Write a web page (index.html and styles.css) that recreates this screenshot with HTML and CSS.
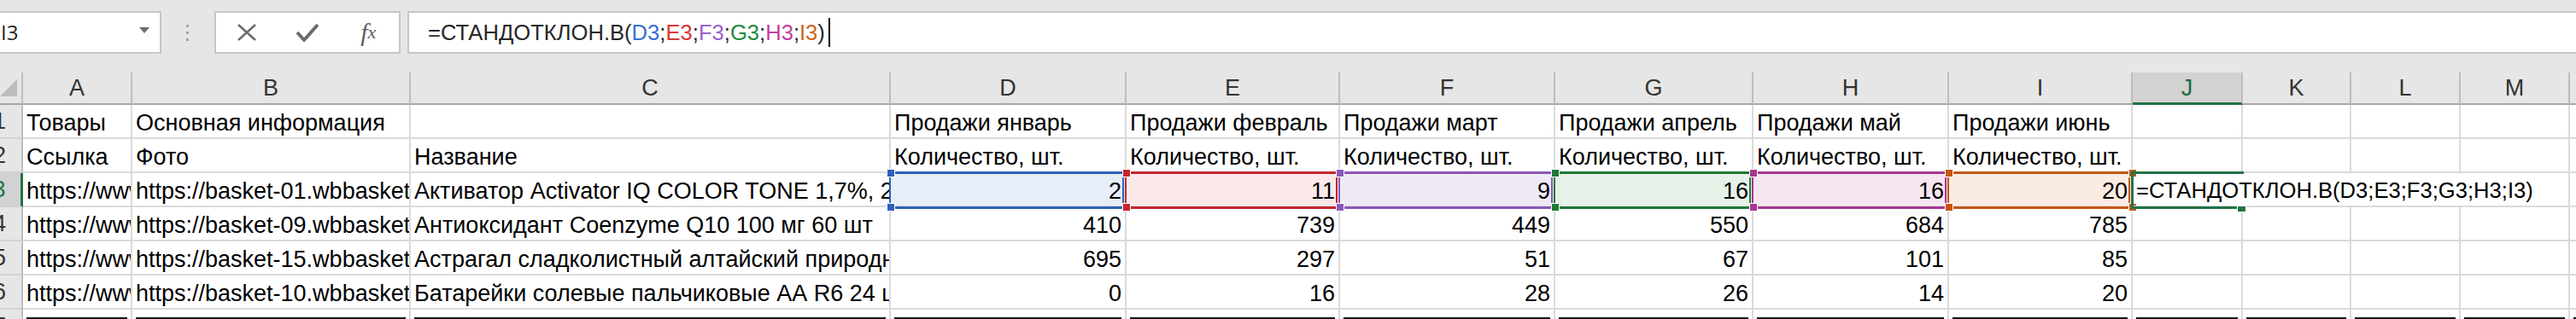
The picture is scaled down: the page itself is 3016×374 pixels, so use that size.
FILE: index.html
```html
<!DOCTYPE html>
<html lang="ru">
<head>
    <meta charset="UTF-8">
    <title>СТАНДОТКЛОН.В</title>
    <link rel="stylesheet" href="styles.css">
</head>
<body>
    <div class="toolbar">
        <div class="namebox"><span>I3</span><span class="caret"></span></div>
        <div class="grip"><i></i><i></i><i></i></div>
        <div class="fbuttons">
            <span class="fbtn">
                <svg width="24" height="20" viewBox="0 0 24 20"><path d="M2 1 L22 19 M22 1 L2 19" stroke="#6b6b6b" stroke-width="2.4" fill="none"/></svg>
            </span>
            <span class="fbtn">
                <svg width="28" height="24" viewBox="0 0 28 24"><path d="M2 12 L10 21 L26 3" stroke="#6b6b6b" stroke-width="4" fill="none" stroke-linejoin="round"/></svg>
            </span>
            <span class="fbtn fx">f<span>x</span></span>
        </div>
        <div class="formula">
            <span class="expr">=СТАНДОТКЛОН.В(<span class="c1">D3</span>;<span class="c2">E3</span>;<span class="c3">F3</span>;<span class="c4">G3</span>;<span class="c5">H3</span>;<span class="c6">I3</span>)</span><span class="cursor"></span>
        </div>
    </div>

    <div class="sheet">
        <!-- column headers -->
        <div class="hd corner"><i class="tri"></i></div>
        <div class="hd">A</div>
        <div class="hd">B</div>
        <div class="hd">C</div>
        <div class="hd">D</div>
        <div class="hd">E</div>
        <div class="hd">F</div>
        <div class="hd">G</div>
        <div class="hd">H</div>
        <div class="hd">I</div>
        <div class="hd sel">J</div>
        <div class="hd">K</div>
        <div class="hd">L</div>
        <div class="hd">M</div>
        <div class="hd">N</div>

        <!-- row 1 -->
        <div class="rn">1</div>
        <div>Товары</div>
        <div>Основная информация</div>
        <div></div>
        <div>Продажи январь</div>
        <div>Продажи февраль</div>
        <div>Продажи март</div>
        <div>Продажи апрель</div>
        <div>Продажи май</div>
        <div>Продажи июнь</div>
        <div></div><div></div><div></div><div></div><div></div>

        <!-- row 2 -->
        <div class="rn">2</div>
        <div>Ссылка</div>
        <div>Фото</div>
        <div>Название</div>
        <div>Количество, шт.</div>
        <div>Количество, шт.</div>
        <div>Количество, шт.</div>
        <div>Количество, шт.</div>
        <div>Количество, шт.</div>
        <div>Количество, шт.</div>
        <div></div><div></div><div></div><div></div><div></div>

        <!-- row 3 -->
        <div class="rn sel">3</div>
        <div>https://www.wildberries.ru/catalog/10236452/detail.aspx</div>
        <div>https://basket-01.wbbasket.ru/vol102/part10236/10236452/images/big/1.jpg</div>
        <div>Активатор Activator IQ COLOR TONE 1,7%, 250 мл</div>
        <div class="num ref r1">2<i class="frame"></i><i class="h tl"></i><i class="h tr"></i><i class="h bl"></i><i class="h br"></i></div>
        <div class="num ref r2">11<i class="frame"></i><i class="h tl"></i><i class="h tr"></i><i class="h bl"></i><i class="h br"></i></div>
        <div class="num ref r3">9<i class="frame"></i><i class="h tl"></i><i class="h tr"></i><i class="h bl"></i><i class="h br"></i></div>
        <div class="num ref r4">16<i class="frame"></i><i class="h tl"></i><i class="h tr"></i><i class="h bl"></i><i class="h br"></i></div>
        <div class="num ref r5">16<i class="frame"></i><i class="h tl"></i><i class="h tr"></i><i class="h bl"></i><i class="h br"></i></div>
        <div class="num ref r6">20<i class="frame"></i><i class="h tl"></i><i class="h tr"></i><i class="h bl"></i><i class="h br"></i></div>
        <div class="active"><span class="expr">=СТАНДОТКЛОН.В(D3;E3;F3;G3;H3;I3)</span><i class="frame"></i><i class="fill"></i></div>
        <div></div>

        <!-- row 4 -->
        <div class="rn">4</div>
        <div>https://www.wildberries.ru/catalog/15486921/detail.aspx</div>
        <div>https://basket-09.wbbasket.ru/vol1548/part154869/15486921/images/big/1.jpg</div>
        <div>Антиоксидант Coenzyme Q10 100 мг 60 шт</div>
        <div class="num">410</div>
        <div class="num">739</div>
        <div class="num">449</div>
        <div class="num">550</div>
        <div class="num">684</div>
        <div class="num">785</div>
        <div></div><div></div><div></div><div></div><div></div>

        <!-- row 5 -->
        <div class="rn">5</div>
        <div>https://www.wildberries.ru/catalog/24115823/detail.aspx</div>
        <div>https://basket-15.wbbasket.ru/vol2411/part241158/24115823/images/big/1.jpg</div>
        <div>Астрагал сладколистный алтайский природный сбор 50 г</div>
        <div class="num">695</div>
        <div class="num">297</div>
        <div class="num">51</div>
        <div class="num">67</div>
        <div class="num">101</div>
        <div class="num">85</div>
        <div></div><div></div><div></div><div></div><div></div>

        <!-- row 6 -->
        <div class="rn">6</div>
        <div>https://www.wildberries.ru/catalog/17354610/detail.aspx</div>
        <div>https://basket-10.wbbasket.ru/vol1735/part173546/17354610/images/big/1.jpg</div>
        <div>Батарейки солевые пальчиковые АА R6 24 шт</div>
        <div class="num">0</div>
        <div class="num">16</div>
        <div class="num">28</div>
        <div class="num">26</div>
        <div class="num">14</div>
        <div class="num">20</div>
        <div></div><div></div><div></div><div></div><div></div>

        <!-- row 7, only its top shows -->
        <div class="rn">7</div>
        <div class="cut"></div><div class="cut"></div><div class="cut"></div><div class="cut"></div>
        <div class="cut"></div><div class="cut"></div><div class="cut"></div><div class="cut"></div>
        <div class="cut"></div><div class="cut"></div><div class="cut"></div><div class="cut"></div>
        <div class="cut"></div><div class="cut"></div>
    </div>
</body>
</html>
```

FILE: styles.css
```css
html, body {
    margin: 0;
}

body {
    width: 3016px;
    height: 374px;
    overflow: hidden;
    background-color: #e6e6e6;
    font-family: "Liberation Sans", Arial, sans-serif;
}

/* formula bar */
.toolbar {
    display: flex;
    align-items: flex-start;
    height: 85px;
    padding-top: 13px;
    box-sizing: border-box;
}

.namebox {
    margin-left: -10px;
    width: 199px;
    height: 50px;
    box-sizing: border-box;
    border: 2px solid #c6c6c6;
    background-color: #fff;
    display: flex;
    align-items: center;
    justify-content: space-between;
    padding: 0 12px 0 9px;
    font-family: "Open Sans", sans-serif;
    font-size: 24px;
    line-height: 24px;
    color: #262626;
}

.caret {
    width: 0;
    height: 0;
    border-left: 6px solid transparent;
    border-right: 6px solid transparent;
    border-top: 7px solid #6b6b6b;
    margin-bottom: 6px;
}

.grip {
    margin-left: 29px;
    height: 50px;
    display: flex;
    flex-direction: column;
    justify-content: center;
    gap: 5px;
}

.grip i {
    width: 3px;
    height: 3px;
    background-color: #a6a6a6;
}

.fbuttons {
    margin-left: 30px;
    width: 218px;
    height: 50px;
    box-sizing: border-box;
    border: 2px solid #c6c6c6;
    background-color: #fff;
    display: flex;
}

.fbtn {
    width: 72px;
    display: flex;
    align-items: center;
    justify-content: center;
}

.fx {
    font-family: "Liberation Serif", serif;
    font-style: italic;
    font-size: 30px;
    color: #5e5e5e;
}

.fx span {
    font-size: 22px;
}

.formula {
    margin-left: 8px;
    margin-right: -10px;
    flex: 1;
    height: 50px;
    box-sizing: border-box;
    border: 2px solid #c6c6c6;
    background-color: #fff;
    display: flex;
    align-items: center;
    padding-left: 22px;
    color: #262626;
    white-space: nowrap;
}

.expr {
    font-size: 25.6px;
    line-height: 26px;
}

.cursor {
    width: 2px;
    height: 34px;
    background-color: #000;
    margin-left: 4px;
}

.c1 { color: #3a6fd1; }
.c2 { color: #d8383a; }
.c3 { color: #9b63c9; }
.c4 { color: #1f8b3e; }
.c5 { color: #c13f9f; }
.c6 { color: #d0641c; }

/* grid */
.sheet {
    display: grid;
    grid-template-columns: 53px 128px 326px 562px 276px 250px 252px 232px 229px 215px 129px 127px 128px 128px 60px;
    grid-template-rows: 38px repeat(7, 40px);
    margin-left: -26px;
    background-color: #fff;
    font-size: 27px;
    line-height: 26px;
    color: #000;
}

.sheet > div {
    box-sizing: border-box;
    min-width: 0;
    border-right: 2px solid #dadada;
    border-bottom: 2px solid #dadada;
    overflow: hidden;
    white-space: nowrap;
    display: flex;
    align-items: flex-end;
    padding: 0 4px 4px;
}

.sheet > .num {
    justify-content: flex-end;
}

.sheet > .hd,
.sheet > .rn {
    background-color: #e6e6e6;
    align-items: center;
    justify-content: center;
    padding: 0;
    color: #333;
}

.sheet > .hd {
    border-right-color: #bdbdbd;
    border-bottom-color: #a6a6a6;
}

.sheet > .rn {
    border-right-color: #bdbdbd;
    border-bottom-color: #d2d2d2;
}

.sheet > .hd.sel {
    background-color: #d2d2d2;
    border-bottom: 3px solid #217346;
    color: #1e6b40;
}

.sheet > .rn.sel {
    background-color: #d2d2d2;
    border-right: 3px solid #217346;
    color: #217346;
}

.corner {
    position: relative;
}

.tri {
    position: absolute;
    right: 5px;
    bottom: 8px;
    width: 0;
    height: 0;
    border-left: 20px solid transparent;
    border-bottom: 20px solid #bcbcbc;
}

/* referenced ranges D3..I3 */
.r1 { --rc: #2c60ba; --rf: #e7eef8; }
.r2 { --rc: #c1272d; --rf: #fbe8e9; }
.r3 { --rc: #8a57b8; --rf: #efe9f6; }
.r4 { --rc: #1c7a35; --rf: #e6f1e7; }
.r5 { --rc: #a83590; --rf: #f6e6f1; }
.r6 { --rc: #c4560f; --rf: #fbece3; }

.sheet > .ref {
    position: relative;
    overflow: visible;
    background-color: var(--rf);
}

.ref .frame {
    position: absolute;
    left: -2px;
    top: -2px;
    right: 1px;
    bottom: -4px;
    border-style: solid;
    border-color: var(--rc);
    border-width: 3px 2px;
}

.ref .h {
    position: absolute;
    width: 8px;
    height: 8px;
    background-color: var(--rc);
    box-shadow: 0 0 0 1px #fff;
}

.h.tl { left: -4px; top: -4px; }
.h.tr { right: -6px; top: -4px; }
.h.bl { left: -4px; bottom: -6px; }
.h.br { right: -6px; bottom: -6px; }

/* cell being edited */
.sheet > .active {
    grid-column: span 4;
    position: relative;
    overflow: visible;
    padding-bottom: 5px;
}

.active .frame {
    position: absolute;
    left: -2px;
    top: -2px;
    bottom: -4px;
    width: 132px;
    box-sizing: border-box;
    border: 3px solid #217346;
    border-right: 0;
}

.active .fill {
    position: absolute;
    left: 123px;
    bottom: -7px;
    width: 9px;
    height: 6px;
    background-color: #217346;
    box-shadow: 0 0 0 1px #fff;
}

.sheet > .cut {
    align-items: flex-start;
    padding: 9px 4px 0;
}

.cut::before {
    content: "";
    flex: 1;
    height: 2px;
    background-color: #111;
}
```
